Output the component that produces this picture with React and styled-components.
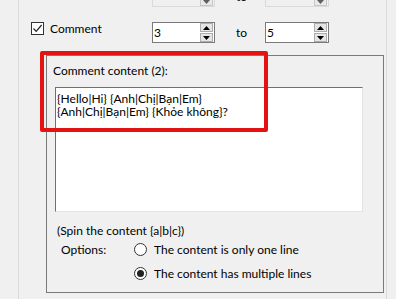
import React from "react";
import styled, { createGlobalStyle } from "styled-components";

const GlobalStyle = createGlobalStyle`
  html, body {
    margin: 0;
    padding: 0;
    width: 396px;
    height: 299px;
    overflow: hidden;
    background: #f0f0f0;
  }
  body {
    font-family: Lato, "Noto Sans", sans-serif;
    font-size: 12px;
    color: #000;
  }
`;

function Arrow({ down }) {
  return (
    <svg width="7" height="4" viewBox="0 0 7 4">
      <polygon points={down ? "0,0 7,0 3.5,4" : "0,4 7,4 3.5,0"} fill="#000" />
    </svg>
  );
}

function Spin({ value, width, disabled }) {
  return (
    <SpinBox $width={width} $disabled={disabled}>
      <SpinValue>{value}</SpinValue>
      <SpinButtons>
        <SpinBtn>
          <Arrow />
        </SpinBtn>
        <SpinBtn>
          <Arrow down />
        </SpinBtn>
      </SpinButtons>
    </SpinBox>
  );
}

function Check({ checked, label }) {
  return (
    <CheckLabel>
      <CheckBox>
        {checked && (
          <svg width="11" height="11" viewBox="0 0 11 11">
            <polyline points="1.5,5.5 4.2,8.4 9.6,2" fill="none" stroke="#222" strokeWidth="1.2" />
          </svg>
        )}
      </CheckBox>
      {label}
    </CheckLabel>
  );
}

function Radio({ checked, children }) {
  return (
    <RadioRow>
      <RadioCircle>{checked && <RadioDot />}</RadioCircle>
      <span>{children}</span>
    </RadioRow>
  );
}

export default function App() {
  return (
    <>
      <GlobalStyle />
      <Panel>
        <Row>
          <Check checked label="" />
          <Spin value="" width={63} disabled />
          <ToText>to</ToText>
          <Spin value="" width={64} disabled />
        </Row>
        <Row>
          <Check checked label="Comment" />
          <Spin value="3" width={63} />
          <ToText>to</ToText>
          <Spin value="5" width={64} />
        </Row>
        <Group>
          <Highlight />
          <GroupTitle>Comment content (2):</GroupTitle>
          <EditBox
            readOnly
            defaultValue={"{Hello|Hi} {Anh|Chị|Bạn|Em}\n{Anh|Chị|Bạn|Em} {Khỏe không}?"}
          />
          <Hint>(Spin the content {"{a|b|c}"})</Hint>
          <Options>
            <OptionsLabel>Options:</OptionsLabel>
            <RadioList>
              <Radio>The content is only one line</Radio>
              <Radio checked>The content has multiple lines</Radio>
            </RadioList>
          </Options>
        </Group>
      </Panel>
    </>
  );
}

/* STYLES */
const Panel = styled.div`
  margin: -14px 0 0 18px;
  width: 369px;
  height: 313px;
  border-left: 1px solid #dadada;
  border-right: 1px solid #dadada;
  box-sizing: border-box;
  padding-left: 12px;
`;

const Row = styled.div`
  display: flex;
  align-items: flex-start;
  height: 21px;
  margin-bottom: 15px;
  &:nth-child(2) {
    margin-bottom: 0;
  }
`;

const CheckLabel = styled.label`
  display: flex;
  align-items: center;
  gap: 6px;
  width: 121px;
  line-height: 13px;
  height: 13px;
`;

const CheckBox = styled.span`
  width: 13px;
  height: 13px;
  box-sizing: border-box;
  border: 1px solid #333;
  background: #fff;
  display: flex;
  align-items: center;
  justify-content: center;
  flex: none;
`;

const SpinBox = styled.div`
  display: flex;
  width: ${(p) => p.$width}px;
  height: 21px;
  box-sizing: border-box;
  border: 1px solid ${(p) => (p.$disabled ? "#cccccc" : "#7a7a7a")};
  background: ${(p) => (p.$disabled ? "#f0f0f0" : "#fff")};
  opacity: ${(p) => (p.$disabled ? 0.6 : 1)};
`;

const SpinValue = styled.span`
  flex: 1;
  padding-left: 1px;
  line-height: 19px;
`;

const SpinButtons = styled.div`
  display: flex;
  flex-direction: column;
  gap: 1px;
  width: 13px;
  margin: 0 1px 0 0;
`;

const SpinBtn = styled.span`
  flex: 1;
  display: flex;
  align-items: center;
  justify-content: center;
  background: #e5e5e5;
  border: 1px solid #adadad;
`;

const ToText = styled.span`
  width: 29px;
  margin-left: 21px;
  line-height: 21px;
`;

const Group = styled.div`
  position: relative;
  margin: 12px 0 0 15px;
  width: 338px;
  height: 238px;
  box-sizing: border-box;
  border: 1px solid #7a7a7a;
  padding: 7px 0 0 6px;
`;

const Highlight = styled.div`
  position: absolute;
  left: -7px;
  top: -5px;
  width: 228px;
  height: 81px;
  box-sizing: border-box;
  border: 4px solid #e41313;
  border-radius: 2px;
  pointer-events: none;
`;

const GroupTitle = styled.div`
  line-height: 15px;
  height: 15px;
`;

const EditBox = styled.textarea`
  display: block;
  margin: 9px 0 0 2px;
  width: 308px;
  height: 125px;
  box-sizing: border-box;
  border: 1px solid #e3e3e3;
  border-top-color: #707070;
  border-left-color: #707070;
  background: #fff;
  padding: 4px 0 0 1px;
  font: inherit;
  line-height: 13px;
  resize: none;
  overflow: hidden;
  outline: none;
`;

const Hint = styled.div`
  margin: 11px 0 0 4px;
  line-height: 15px;
`;

const Options = styled.div`
  display: flex;
  margin: 4px 0 0 8px;
`;

const OptionsLabel = styled.span`
  width: 73px;
  line-height: 15px;
`;

const RadioList = styled.div`
  display: flex;
  flex-direction: column;
  gap: 9px;
`;

const RadioRow = styled.label`
  display: flex;
  align-items: center;
  gap: 7px;
  line-height: 15px;
`;

const RadioCircle = styled.span`
  width: 13px;
  height: 13px;
  box-sizing: border-box;
  border: 1px solid #333;
  border-radius: 50%;
  background: #fff;
  display: flex;
  align-items: center;
  justify-content: center;
`;

const RadioDot = styled.span`
  width: 7px;
  height: 7px;
  border-radius: 50%;
  background: #222;
`;
